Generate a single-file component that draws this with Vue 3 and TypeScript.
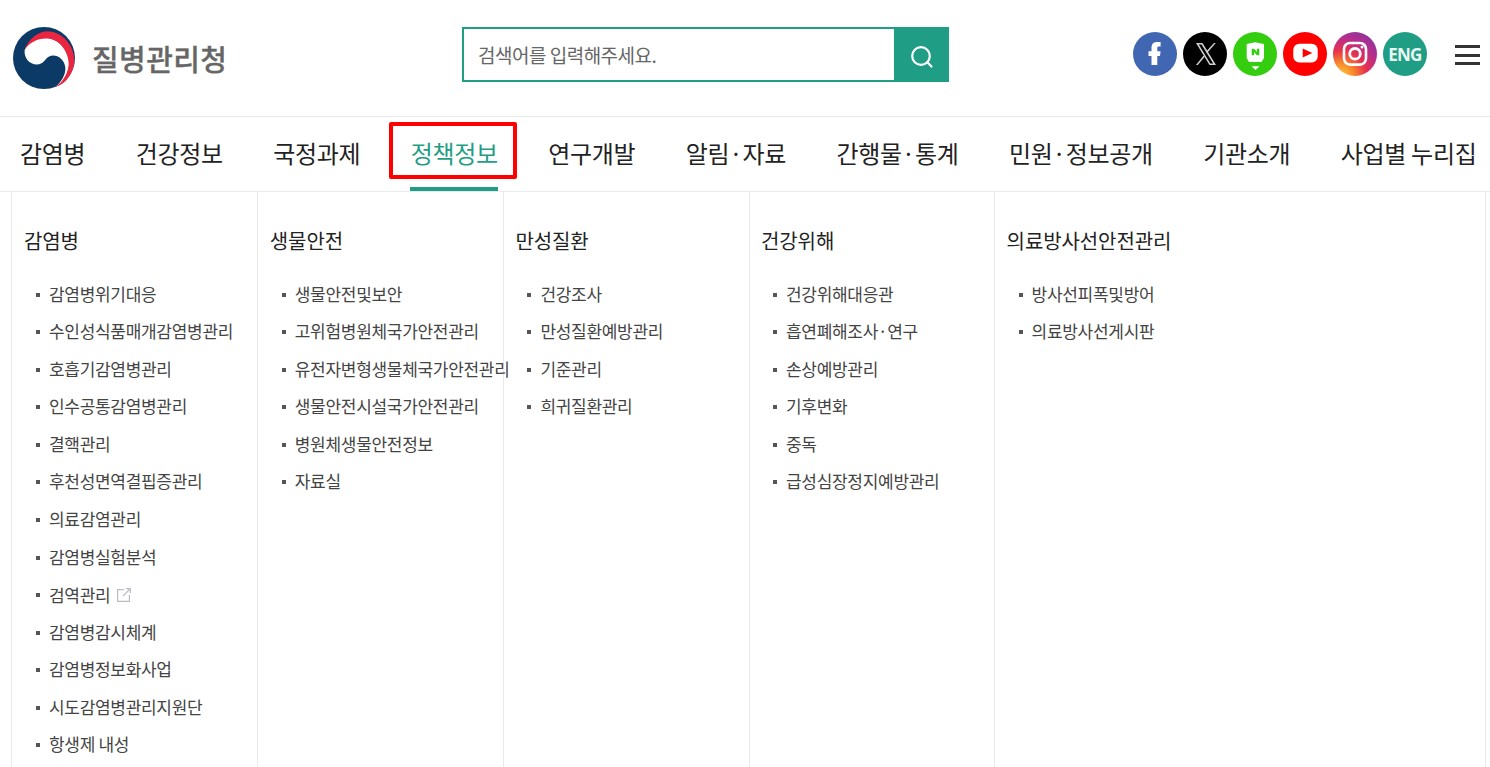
<script setup lang="ts">
interface Column { title: string; items: { label: string; external?: boolean }[] }
const navItems: string[] = ['감염병', '건강정보', '국정과제', '정책정보', '연구개발', '알림·자료', '간행물·통계', '민원·정보공개', '기관소개', '사업별 누리집']
const activeNav = '정책정보'
const toItems = (labels: string[]) => labels.map((label) => ({ label, external: label === '검역관리' }))
const columns: Column[] = [
  { title: '감염병', items: toItems(['감염병위기대응', '수인성식품매개감염병관리', '호흡기감염병관리', '인수공통감염병관리', '결핵관리', '후천성면역결핍증관리', '의료감염관리', '감염병실험분석', '검역관리', '감염병감시체계', '감염병정보화사업', '시도감염병관리지원단', '항생제 내성']) },
  { title: '생물안전', items: toItems(['생물안전및보안', '고위험병원체국가안전관리', '유전자변형생물체국가안전관리', '생물안전시설국가안전관리', '병원체생물안전정보', '자료실']) },
  { title: '만성질환', items: toItems(['건강조사', '만성질환예방관리', '기준관리', '희귀질환관리']) },
  { title: '건강위해', items: toItems(['건강위해대응관', '흡연폐해조사·연구', '손상예방관리', '기후변화', '중독', '급성심장정지예방관리']) },
  { title: '의료방사선안전관리', items: toItems(['방사선피폭및방어', '의료방사선게시판']) },
  { title: '', items: [] },
]
</script>

<template>
  <div class="page">
    <header class="top">
      <div class="logo">
        <svg class="mark" viewBox="13 15 187 187" aria-hidden="true">
          <circle cx="106.500" cy="108.500" r="93.500" fill="#0b3a66" />
          <path d="M48 85C60 55 90 45 118 48C160 55 185 90 182 130C178 165 160 185 140 197C158 182 172 160 171 138C168 108 140 95 122 104C108 112 105 128 85 128C62 128 46 108 48 85Z" fill="#fff" />
          <path d="M48 85C60 50 90 28 118 28C160 28 198 70 198 115C198 150 175 185 140 197C165 180 182 150 181 122C178 85 150 52 118 50C88 48 62 62 48 85Z" fill="#e8263f" />
        </svg>
        <span class="logo-text">질병관리청</span>
      </div>
      <form class="search" @submit.prevent>
        <input class="search-input" type="text" placeholder="검색어를 입력해주세요." aria-label="검색어" />
        <button class="search-btn" type="submit" aria-label="검색">
          <svg class="search-icon" width="24" height="24" viewBox="0 0 24 24" fill="none" stroke="#fff" stroke-width="2.200" stroke-linecap="round">
            <circle cx="11" cy="11" r="8.800" />
            <path d="M17.300 17.300l4.200 4.200" />
          </svg>
        </button>
      </form>
      <div class="socials">
        <span class="social fb">
          <svg viewBox="0 0 44 44"><path d="M18.500 33V24H15.500V19.200H18.500V16C18.500 12 20.500 10 24 10H27.600V14.600H25.500C24.700 14.600 24.300 15 24.300 16V19.200H27.600L27 24H24.300V33Z" fill="#fff" /></svg>
        </span>
        <span class="social x">
          <svg viewBox="0 0 44 44">
            <path d="M13 11h6.500L33 33h-6.500zM15.800 12.400l11.500 19.200h2.900L18.500 12.400z" fill="#cfcfcf" fill-rule="evenodd" />
            <path d="M31 11h1.800l-8.900 10.200-.9-1.400zM20.600 23.600l.9 1.400L14.800 33H13z" fill="#cfcfcf" />
          </svg>
        </span>
        <span class="social blog">
          <svg viewBox="0 0 44 44">
            <path d="M13.700 12L22 10.200L31 12V26L28.500 30H16L13.700 26Z" fill="#fff" />
            <path d="M18.700 16.700h2.400l2.800 3.300v-3.300h2.400v6.600h-2.400l-2.800-3.300v3.300h-2.400z" fill="#35cd0f" />
            <path d="M18.500 34.300H26.500L22.500 38Z" fill="#fff" />
          </svg>
        </span>
        <span class="social yt">
          <svg viewBox="0 0 44 44">
            <rect x="10.300" y="11.700" width="24.400" height="18.800" rx="6" fill="#fff" />
            <path d="M19.700 16.500L29.300 21L19.700 25.500Z" fill="#f00" />
          </svg>
        </span>
        <span class="social ig">
          <svg viewBox="0 0 44 44" fill="none" stroke="#fff">
            <rect x="11" y="11" width="22" height="21.600" rx="6" stroke-width="2.600" />
            <circle cx="22" cy="21.800" r="5.300" stroke-width="2.800" />
            <circle cx="29" cy="15" r="1.500" fill="#fff" stroke="none" />
          </svg>
        </span>
        <span class="social eng">ENG</span>
      </div>
      <button class="menu" type="button" aria-label="전체메뉴">
        <span></span><span></span><span></span>
      </button>
    </header>

    <nav class="gnb">
      <a v-for="item in navItems" :key="item" class="gnb-item" :class="{ active: item === activeNav }">
        {{ item }}
        <i v-if="item === activeNav" class="highlight"></i>
      </a>
    </nav>

    <section class="panel">
      <div v-for="(col, i) in columns" :key="i" class="col">
        <h3 v-if="col.title" class="col-title">{{ col.title }}</h3>
        <ul class="list">
          <li v-for="it in col.items" :key="it.label" class="list-item" :class="{ 'has-ext': it.external }">
            <span>{{ it.label }}</span>
            <svg v-if="it.external" class="ext" viewBox="0 0 14 14" fill="none" stroke="#b8bdc6" stroke-width="1.200">
              <path d="M7 1.600H.6v11.800h11.800V7" />
              <path d="M6 8l7-7M9 .7h4.300V5" />
            </svg>
          </li>
        </ul>
      </div>
    </section>
  </div>
</template>

<style>
html, body { margin: 0; background: #fff; overflow: hidden; }
</style>

<style scoped>
.page {
  height: 767px;
  overflow: hidden;
  font-family: "Noto Sans CJK KR", "Noto Sans", sans-serif;
  color: #222;
}
.top {
  height: 116px;
  display: flex;
  align-items: flex-start;
}
.logo {
  width: 462px;
  height: 62px;
  margin-top: 27px;
  display: flex;
  align-items: center;
  flex: none;
  padding-left: 13px;
  box-sizing: border-box;
  gap: 17px;
}
.mark { width: 62px; height: 62px; flex: none; }
.logo-text { font-size: 29px; font-weight: 500; color: #666; -webkit-text-stroke: 0.3px #666; line-height: 1; letter-spacing: 0.4px; white-space: nowrap; }
.search {
  width: 487px;
  height: 55px;
  margin-top: 27px;
  flex: none;
  display: flex;
  box-sizing: border-box;
  border: 2px solid #1f9e85;
}
.search-input {
  flex: 1;
  min-width: 0;
  border: 0;
  outline: 0;
  padding: 0 0 0 14px;
  font: 400 19px "Noto Sans CJK KR", sans-serif;
  letter-spacing: -0.5px;
  color: #666;
  background: #fff;
}
.search-input::placeholder { color: #666; opacity: 1; }
.search-btn {
  width: 53px;
  flex: none;
  border: 0;
  padding: 0;
  background: #1f9e85;
  display: flex;
  align-items: center;
  justify-content: center;
}
.search-icon { margin: 4px 0 0 2px; }
.socials {
  margin: 32px 0 0 184px;
  display: flex;
  gap: 6px;
  flex: none;
}
.social {
  width: 44px;
  height: 44px;
  border-radius: 50%;
  overflow: hidden;
  display: flex;
  align-items: center;
  justify-content: center;
}
.social svg { width: 44px; height: 44px; display: block; }
.fb { background: #4267b2; }
.x { background: #000; }
.blog { background: #35cd0f; }
.yt { background: #f00; }
.ig { background: radial-gradient(circle at 18% 100%, #fdcb45 0%, #f98a2a 22%, #e8304f 45%, #b42e8e 68%, #6f3aa5 100%); }
.eng { background: #1f9e85; color: #e8f5f2; font-size: 17px; font-weight: 700; letter-spacing: -0.800px; font-family: "Open Sans", sans-serif; }
.menu {
  margin: 45px 0 0 28px;
  width: 25px;
  padding: 0;
  border: 0;
  background: none;
  display: flex;
  flex-direction: column;
  gap: 5.500px;
}
.menu span { display: block; height: 3px; background: #333; }
.gnb {
  height: 76px;
  box-sizing: border-box;
  border-top: 1px solid #e9eaf0;
  border-bottom: 1px solid #e9eaf0;
  display: flex;
  align-items: stretch;
  padding-left: 20px;
  gap: 50.400px;
}
.gnb-item {
  position: relative;
  font-size: 24px;
  letter-spacing: -0.300px;
  line-height: 72px;
  color: #222;
  white-space: nowrap;
}
.gnb-item.active { color: #1f9e85; }
.gnb-item.active::after {
  content: "";
  position: absolute;
  left: -1px;
  right: 0;
  bottom: 0;
  height: 4px;
  background: #1f9e85;
}
.highlight {
  position: absolute;
  left: -22px;
  right: -19px;
  top: 5px;
  height: 57px;
  box-sizing: border-box;
  border: 4px solid #f00;
  border-radius: 2px;
}
.panel {
  margin: 0 3.700px 0 10.700px;
  display: grid;
  grid-template-columns: repeat(6, 1fr);
  height: 575px;
  border-left: 1px solid #e9eaf0;
  border-right: 1px solid #e9eaf0;
}
.col {
  border-left: 1px solid #e9eaf0;
  padding: 33px 0 0 11.500px;
  min-width: 0;
}
.col:first-child { border-left: 0; padding-left: 12.300px; }
.col:last-child { border-left: 0; }
.col-title {
  margin: 0;
  font-size: 20px;
  font-weight: 400;
  letter-spacing: -0.100px;
  line-height: 32px;
  color: #222;
  white-space: nowrap;
}
.list { list-style: none; margin: 17.550px 0 0; padding: 0; }
.list-item {
  position: relative;
  height: 37.580px;
  line-height: 37.580px;
  padding-left: 25px;
  font-size: 17px;
  letter-spacing: -0.300px;
  color: #444;
  white-space: nowrap;
  display: flex;
  align-items: center;
  gap: 7px;
}
.list-item::before {
  content: "";
  position: absolute;
  left: 12px;
  top: 18px;
  width: 4px;
  height: 4px;
  background: #555;
}
.has-ext { box-sizing: border-box; padding-top: 2px; }
.ext { width: 14px; height: 14px; flex: none; }
</style>
